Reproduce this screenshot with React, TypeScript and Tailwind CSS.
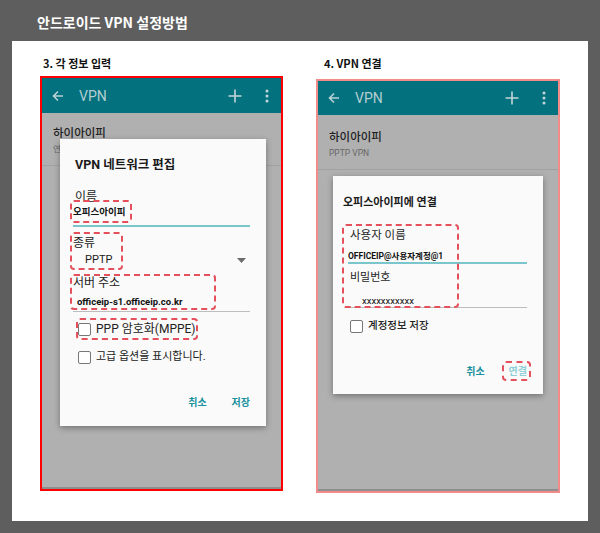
import React from 'react';

const androidFont = "font-['Roboto','Noto_Sans_CJK_KR',sans-serif]";

function BackArrow() {
    return (
        <svg width="12" height="12" viewBox="0 0 12 12" className="ml-[10px] shrink-0">
            <path d="M11 6H1.5M6 1.5L1.5 6L6 10.5" stroke="#b9d1d5" strokeWidth="1.6" fill="none"/>
        </svg>
    )
}

function PlusIcon() {
    return (
        <svg width="14" height="14" viewBox="0 0 14 14" className="shrink-0">
            <path d="M7 0.5V13.5M0.5 7H13.5" stroke="#c3d5d8" strokeWidth="1.6"/>
        </svg>
    )
}

function DotsIcon() {
    return (
        <svg width="4" height="14" viewBox="0 0 4 14" className="ml-[23px] mr-[12px] shrink-0">
            <circle cx="2" cy="2" r="1.5" fill="#c3d5d8"/>
            <circle cx="2" cy="7" r="1.5" fill="#c3d5d8"/>
            <circle cx="2" cy="12" r="1.5" fill="#c3d5d8"/>
        </svg>
    )
}

function CheckBox({label, size}:{label:string, size:string}) {
    return (
        <div className="flex items-center h-[14px]">
            <div className="w-[13px] h-[13px] border-[1.5px] border-[#777] rounded-[2px] bg-white shrink-0"/>
            <span className={`ml-[5px] ${size} leading-[14px] text-[#222] whitespace-nowrap`}>{label}</span>
        </div>
    )
}

// red dashed annotation drawn over a field
function Mark({className}:{className:string}) {
    return <div className={`absolute border-2 border-dashed border-[#e4505b] rounded-[4px] ${className}`}/>
}

function PhoneFrame({frameClass, headerH, subtitle, titleClass, children}:{
    frameClass:string, headerH:string, subtitle:string, titleClass:string, children:React.ReactNode
}) {
    return (
        <div className={`flex flex-col ${frameClass} ${androidFont}`}>
            <div className={`${headerH} bg-[#04717f] flex items-center shrink-0`}>
                <BackArrow/>
                <span className="ml-[15px] text-[14px] leading-[16px] text-[#b3cdd1]">VPN</span>
                <div className="flex-1"/>
                <PlusIcon/>
                <DotsIcon/>
            </div>
            <div className="flex-1 relative bg-[#b0b0b0] border-b-2 border-[#8e8e8e]">
                <div className={`pl-[11px] ${titleClass}`}>
                    <div className="text-[11.5px] leading-[14px] text-[#1e1e1e] font-medium">하이아이피</div>
                    <div className="mt-[3px] text-[8.5px] leading-[12px] text-[#666]">{subtitle}</div>
                </div>
                <div className="mt-[10px] h-px bg-[#a1a1a1]"/>
                {children}
            </div>
        </div>
    )
}

function EditDialog() {
    return (
        <div className="absolute left-[18px] top-[26px] w-[206px] h-[287px] bg-[#fafafa] shadow-[0_2px_6px_rgba(0,0,0,0.35)]">
            <div className="pt-[17px] pl-[15px] text-[12.5px] leading-[18px] font-bold text-[#1a1a1a]">VPN 네트워크 편집</div>
            <div className="pl-[13px] pr-[16px] flex flex-col">
                <div className="mt-[17px] pl-[2px] text-[12px] leading-[12px] text-[#222]">이름</div>
                <div className="mt-[3px] text-[9.5px] leading-[12px] font-bold text-[#111]">오피스아이피</div>
                <div className="mt-[7px] h-[2px] bg-[#7bc6cc]"/>
                <div className="mt-[10px] text-[12px] leading-[12px] text-[#222]">종류</div>
                <div className="mt-[5px] flex items-center justify-between">
                    <span className="pl-[12px] text-[11px] leading-[12px] text-[#1a1a1a]">PPTP</span>
                    <svg width="9" height="5" viewBox="0 0 9 5" className="mr-[4px]">
                        <path d="M0 0H9L4.5 5Z" fill="#6b6b6b"/>
                    </svg>
                </div>
                <div className="mt-[11px] text-[12px] leading-[12px] text-[#222]">서버 주소</div>
                <div className="mt-[7px] pl-[4px] text-[9.5px] leading-[12px] font-bold text-[#111]">officeip-s1.officeip.co.kr</div>
                <div className="mt-[3px] h-px bg-[#bdbdbd]"/>
                <div className="mt-[10px] pl-[5px]"><CheckBox label="PPP 암호화(MPPE)" size="text-[12px]"/></div>
                <div className="mt-[14px] pl-[5px]"><CheckBox label="고급 옵션을 표시합니다." size="text-[11px]"/></div>
            </div>
            <div className="mt-[32px] pr-[16px] flex justify-end gap-[25px] text-[10px] leading-[14px] font-bold text-[#19919e]">
                <span>취소</span>
                <span>저장</span>
            </div>
            <Mark className="left-[10px] top-[61px] w-[62px] h-[23px]"/>
            <Mark className="left-[10px] top-[93px] w-[53px] h-[38px]"/>
            <Mark className="left-[10px] top-[135px] w-[146px] h-[36px]"/>
            <Mark className="left-[16px] top-[179px] w-[122px] h-[22px]"/>
        </div>
    )
}

function ConnectDialog() {
    return (
        <div className="absolute left-[15px] top-[61px] w-[210px] h-[218px] bg-[#fafafa] shadow-[0_2px_6px_rgba(0,0,0,0.35)]">
            <div className="pt-[19px] pl-[10px] text-[11px] leading-[16px] font-bold text-[#1a1a1a]">오피스아이피에 연결</div>
            <div className="pl-[15px] pr-[16px] flex flex-col">
                <div className="mt-[16px] pl-[2px] text-[11.5px] leading-[16px] text-[#1e1e1e]">사용자 이름</div>
                <div className="mt-[7px] text-[8.5px] leading-[12px] font-bold text-[#111]">OFFICEIP@사용자계정@1</div>
                <div className="h-[2px] bg-[#7bc6cc]"/>
                <div className="mt-[6px] pl-[2px] text-[11px] leading-[16px] text-[#1e1e1e]">비밀번호</div>
                <div className="mt-[9px] pl-[14px] text-[9.5px] leading-[12px] text-[#111]">xxxxxxxxxxx</div>
                <div className="h-px bg-[#bdbdbd]"/>
                <div className="mt-[11px] pl-[2px]"><CheckBox label="계정정보 저장" size="text-[10.5px] font-medium"/></div>
            </div>
            <div className="mt-[32px] pr-[16px] flex justify-end gap-[24px] text-[10px] leading-[14px] font-bold">
                <span className="text-[#19919e]">취소</span>
                <span className="text-[#8fd0d6]">연결</span>
            </div>
            <Mark className="left-[9px] top-[48px] w-[117px] h-[84px]"/>
            <Mark className="left-[169px] top-[185px] w-[29px] h-[20px]"/>
        </div>
    )
}

export default function App() {
    return (
        <div className="w-[600px] h-[533px] bg-[#5e5e5e] font-['Noto_Sans_CJK_KR',sans-serif]">
            <div className="h-[41px] pl-[37px] pt-[13px] text-[14px] leading-[18px] font-bold text-white">안드로이드 VPN 설정방법</div>
            <div className="ml-[12px] w-[576px] h-[480px] bg-white flex">
                <div className="ml-[28px] w-[243px] flex flex-col">
                    <div className="pt-[15px] pl-[3px] text-[11px] leading-[14px] font-bold text-[#111]">3. 각 정보 입력</div>
                    <div className="mt-[6px]">
                        <PhoneFrame frameClass="h-[415px] border-2 border-[#ff0000]" headerH="h-[35px]" subtitle="연결 안됨" titleClass="pt-[13px]">
                            <EditDialog/>
                        </PhoneFrame>
                    </div>
                </div>
                <div className="ml-[33px] w-[244px] flex flex-col">
                    <div className="pt-[15px] pl-[8px] text-[11px] leading-[14px] font-bold text-[#111]">4. VPN 연결</div>
                    <div className="mt-[9px]">
                        <PhoneFrame frameClass="h-[414px] border-2 border-[#f38b8b]" headerH="h-[34px]" subtitle="PPTP VPN" titleClass="pt-[15px]">
                            <ConnectDialog/>
                        </PhoneFrame>
                    </div>
                </div>
            </div>
        </div>
    )
}
